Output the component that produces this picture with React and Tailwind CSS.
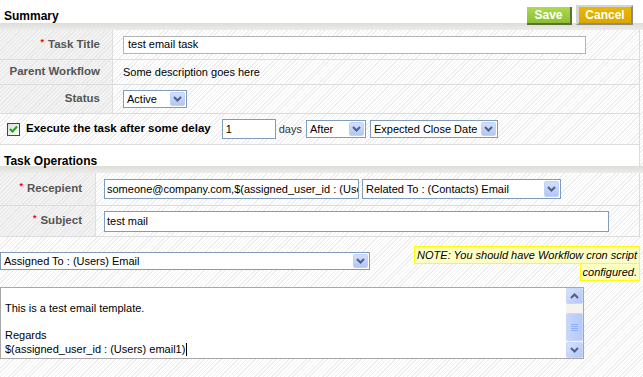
import React from "react";

function Chev({ up }) {
  return (
    <svg width="9" height="6" viewBox="0 0 9 6">
      <path d={up ? "M1 5 L4.5 1.5 L8 5" : "M1 1 L4.5 4.5 L8 1"} stroke="#4d6185" strokeWidth="2" fill="none" />
    </svg>
  );
}

function DropBtn() {
  return (
    <div className="w-[15px] self-stretch m-[1px] flex items-center justify-center rounded-[2px] border border-[#bfd0fa] bg-gradient-to-b from-[#d2defc] to-[#b3c6f5]">
      <Chev />
    </div>
  );
}

function Select({ cls, text }) {
  return (
    <div className={"flex items-stretch border border-[#7f9db9] bg-white text-[11px] text-black " + cls}>
      <div className="flex-1 flex items-center pl-[3px] whitespace-nowrap overflow-hidden">{text}</div>
      <DropBtn />
    </div>
  );
}

function Star() {
  return <span className="text-[#ff0000] text-[9px] mr-[4px] relative top-[-2px]">*</span>;
}

function Checkbox() {
  return (
    <div className="w-[13px] h-[13px] border border-[#1c5180] bg-gradient-to-br from-[#dcdcd7] to-[#ffffff] flex items-center justify-center">
      <svg width="9" height="9" viewBox="0 0 9 9">
        <path d="M1 4 L3.5 6.5 L8 1.5" stroke="#21a121" strokeWidth="2" fill="none" />
      </svg>
    </div>
  );
}

export default function App() {
  return (
    <div className="w-[643px] h-[377px] overflow-hidden font-['Liberation_Sans',Arial,sans-serif] text-black bg-[image:repeating-linear-gradient(135deg,#ffffff_0px,#ffffff_2px,#eeeeee_2px,#eeeeee_3px)]">
      {/* Summary header */}
      <div className="h-[23px] bg-white flex items-start justify-between pl-[4px] pr-[10px]">
        <span className="text-[12px] font-bold leading-[14px] mt-[9px]">Summary</span>
        <div className="flex items-start gap-[4px] mt-[5px]">
          <div className="w-[45px] h-[18px] mt-[2px] border-r-2 border-b-2 border-[#5f6f3c] bg-gradient-to-b from-[#acdb4e] to-[#8cbf30] flex items-center justify-center text-white font-bold text-[12px]">
            Save
          </div>
          <div className="w-[57px] h-[20px] border-l-[3px] border-t-[2px] border-r-2 border-b-2 border-l-[#d6d6ce] border-t-[#d6d6ce] border-r-[#8c8c84] border-b-[#8c8c84] bg-gradient-to-b from-[#eab800] to-[#dca600] flex items-center justify-center text-white font-bold text-[12px]">
            Cancel
          </div>
        </div>
      </div>
      <div className="h-[7px] bg-gradient-to-b from-[#dcdcd8] to-[#ececea]" />

      {/* Table 1 */}
      <div className="w-[640px] border-r border-[#dcdcdc]">
        <div className="flex h-[30px] border-b border-[#dcdcdc]">
          <div className="w-[113px] border-r border-[#dedede] flex items-center justify-end pr-[12px] text-[11.5px] font-bold text-[#555555] bg-[image:repeating-linear-gradient(135deg,#f2f2f2_0px,#f2f2f2_2px,#e8e8e8_2px,#e8e8e8_3px)]">
            <Star />Task Title
          </div>
          <div className="flex-1 flex items-center pl-[10px]">
            <div className="w-[463px] h-[18px] border border-[#b4b4b4] bg-white flex items-center pl-[4px] text-[11px]">test email task</div>
          </div>
        </div>
        <div className="flex h-[25px] border-b border-[#dcdcdc]">
          <div className="w-[113px] border-r border-[#dedede] flex items-center justify-end pr-[12px] text-[11.5px] font-bold text-[#555555] bg-[image:repeating-linear-gradient(135deg,#f2f2f2_0px,#f2f2f2_2px,#e8e8e8_2px,#e8e8e8_3px)]">
            Parent Workflow
          </div>
          <div className="flex-1 flex items-center pl-[10px] text-[11px]">Some description goes here</div>
        </div>
        <div className="flex h-[29px] border-b border-[#dcdcdc]">
          <div className="w-[113px] border-r border-[#dedede] flex items-center justify-end pr-[12px] text-[11.5px] font-bold text-[#555555] bg-[image:repeating-linear-gradient(135deg,#f2f2f2_0px,#f2f2f2_2px,#e8e8e8_2px,#e8e8e8_3px)]">
            Status
          </div>
          <div className="flex-1 flex items-center pl-[10px]">
            <Select cls="w-[64px] h-[18px]" text="Active" />
          </div>
        </div>
        <div className="flex h-[31px] border-b border-[#dcdcdc] items-center pl-[7px]">
          <Checkbox />
          <span className="ml-[6px] text-[11.5px] font-bold">Execute the task after some delay</span>
          <div className="ml-[11px] w-[54px] h-[20px] border border-[#7f9db9] bg-white flex items-center pl-[3px] text-[11px]">1</div>
          <span className="ml-[3px] text-[11px] text-[#333333]">days</span>
          <Select cls="ml-[4px] w-[60px] h-[18px]" text="After" />
          <Select cls="ml-[4px] w-[128px] h-[18px]" text="Expected Close Date" />
        </div>

        {/* Task Operations header */}
        <div className="h-[21px] bg-white flex items-start pl-[4px]">
          <span className="text-[12px] font-bold leading-[14px] mt-[9px]">Task Operations</span>
        </div>
      </div>
      <div className="h-[7px] bg-gradient-to-b from-[#dcdcd8] to-[#ececea]" />

      {/* Table 2 */}
      <div className="w-[640px] border-r border-[#dcdcdc]">
        <div className="flex h-[33px] border-b border-[#dcdcdc]">
          <div className="w-[96px] border-r border-[#dedede] flex items-center justify-end pr-[13px] text-[11.5px] font-bold text-[#555555] bg-[image:repeating-linear-gradient(135deg,#f2f2f2_0px,#f2f2f2_2px,#e8e8e8_2px,#e8e8e8_3px)]">
            <Star />Recepient
          </div>
          <div className="flex-1 flex items-center pl-[8px]">
            <div className="w-[255px] h-[20px] border border-[#7f9db9] bg-white flex items-center pl-[2px] text-[11px] whitespace-nowrap overflow-hidden">
              someone@company.com,$(assigned_user_id : (Users) email1)
            </div>
            <Select cls="ml-[3px] w-[199px] h-[20px]" text="Related To : (Contacts) Email" />
          </div>
        </div>
        <div className="flex h-[31px] border-b border-[#dcdcdc]">
          <div className="w-[96px] border-r border-[#dedede] flex items-center justify-end pr-[13px] text-[11.5px] font-bold text-[#555555] bg-[image:repeating-linear-gradient(135deg,#f2f2f2_0px,#f2f2f2_2px,#e8e8e8_2px,#e8e8e8_3px)]">
            <Star />Subject
          </div>
          <div className="flex-1 flex items-center pl-[8px]">
            <div className="w-[505px] h-[21px] border border-[#7f9db9] bg-white flex items-center pl-[2px] text-[11px]">test mail</div>
          </div>
        </div>
      </div>

      {/* Assigned To + note */}
      <div className="h-[50px] flex items-start justify-between">
        <Select cls="mt-[15px] w-[370px] h-[18px]" text="Assigned To : (Users) Email" />
        <div className="mt-[9px] mr-[3px] w-[240px] text-right leading-[15px]">
          <span className="box-decoration-clone bg-[#ffffc4] border border-[#ffff00] italic text-[11px] px-[2px] py-[2px]">
            NOTE: You should have Workflow cron script configured.
          </span>
        </div>
      </div>

      {/* Textarea */}
      <div className="w-[584px] h-[72px] border border-[#a8a8a8] bg-white flex">
        <div className="flex-1 pl-[4px] text-[11px] leading-[13.7px] whitespace-pre">
          <div>&nbsp;</div>
          <div>This is a test email template.</div>
          <div>&nbsp;</div>
          <div>Regards</div>
          <div className="flex items-center">
            $(assigned_user_id : (Users) email1)<span className="inline-block w-[1px] h-[13px] bg-black ml-[1px]" />
          </div>
        </div>
        <div className="w-[17px] flex flex-col bg-[#f4f3ee]">
          <div className="h-[16px] rounded-[2px] border border-[#c9d6f8] bg-gradient-to-br from-[#d6e1fd] to-[#b4c7f4] flex items-center justify-center">
            <Chev up />
          </div>
          <div className="h-[9px]" />
          <div className="h-[28px] rounded-[2px] border border-[#c9d6f8] bg-gradient-to-r from-[#c8d6fb] to-[#b6c9f6] flex flex-col items-center justify-center gap-[1px]">
            <div className="w-[7px] h-[1px] bg-[#8cb0f8]" />
            <div className="w-[7px] h-[1px] bg-[#8cb0f8]" />
            <div className="w-[7px] h-[1px] bg-[#8cb0f8]" />
            <div className="w-[7px] h-[1px] bg-[#8cb0f8]" />
          </div>
          <div className="h-[1px]" />
          <div className="h-[16px] rounded-[2px] border border-[#c9d6f8] bg-gradient-to-br from-[#d6e1fd] to-[#b4c7f4] flex items-center justify-center">
            <Chev />
          </div>
        </div>
      </div>
    </div>
  );
}
